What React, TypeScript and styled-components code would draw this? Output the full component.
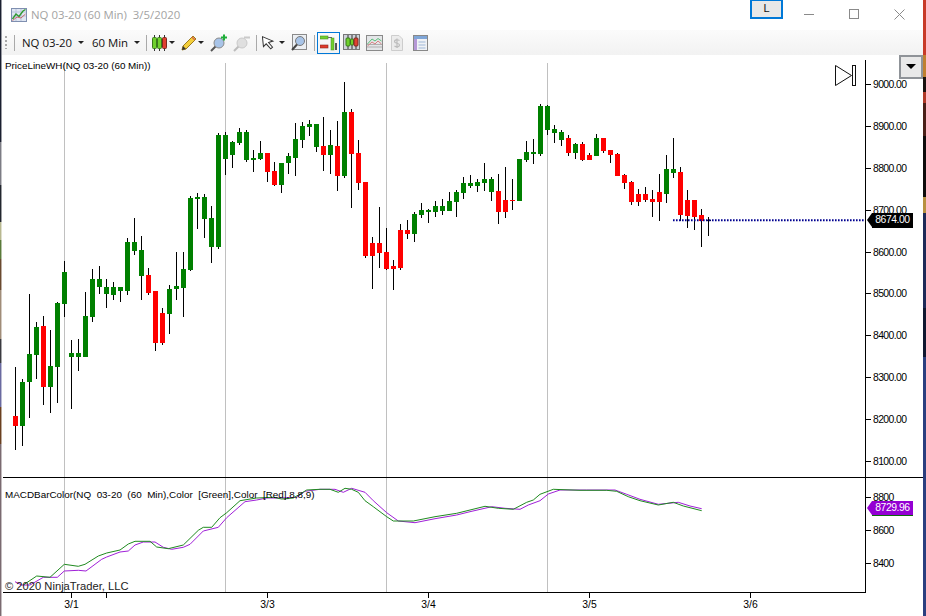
import React from 'react';
import styled, { createGlobalStyle } from 'styled-components';

const Global = createGlobalStyle`
  html, body { margin: 0; padding: 0; background: #fff; }
  #root { width: 926px; height: 616px; overflow: hidden; }
`;

const Desktop = styled.div`
  display: flex;
  width: 926px;
  height: 616px;
`;
const Strip = styled.div<{ $w: number; $bg: string }>`
  width: ${p => p.$w}px;
  flex: none;
  background: ${p => p.$bg};
`;
const Win = styled.div`
  flex: 1;
  display: flex;
  flex-direction: column;
  min-width: 0;
  background: #fff;
`;
const TitleBar = styled.div`
  height: 30px;
  flex: none;
  display: flex;
  align-items: flex-start;
  font-family: "Open Sans", "Liberation Sans", sans-serif;
`;
const TitleIcon = styled.svg`
  margin: 7px 0 0 9px;
  flex: none;
`;
const TitleText = styled.div`
  margin: 7px 0 0 4px;
  font-size: 11.4px;
  line-height: 16px;
  color: #a3a3a3;
  white-space: pre;
  flex: 1;
`;
const LockButton = styled.div`
  width: 33px;
  height: 19px;
  box-sizing: border-box;
  border: 2px solid #0078d7;
  border-top-width: 1px;
  background: #e8e8e8;
  font-family: "Liberation Sans", sans-serif;
  font-size: 11px;
  line-height: 15px;
  text-align: center;
  color: #111;
`;
const WinControls = styled.div`
  display: flex;
  margin: 9px 0 0 21px;
  gap: 35px;
  width: 119px;
`;
const Toolbar = styled.div`
  height: 25px;
  flex: none;
  display: flex;
  align-items: center;
  background: linear-gradient(#fbfbfb, #f2f2f2);
  font-family: "Open Sans", "Liberation Sans", sans-serif;
  font-size: 11.4px;
  color: #111;
`;
const Grip = styled.div`
  width: 2px;
  height: 13px;
  margin-left: 3px;
  background: repeating-linear-gradient(#a8a8a8 0 2px, transparent 2px 4px);
`;
const Sep = styled.div<{ $ml: number }>`
  width: 1px;
  height: 16px;
  margin-left: ${p => p.$ml}px;
  background: #a9a9a9;
  flex: none;
`;
const Combo = styled.span<{ $ml: number; $w: number }>`
  margin-left: ${p => p.$ml}px;
  width: ${p => p.$w}px;
  flex: none;
  white-space: nowrap;
`;
const Caret = styled.span<{ $ml: number }>`
  margin-left: ${p => p.$ml}px;
  width: 0;
  height: 0;
  flex: none;
  border-left: 3px solid transparent;
  border-right: 3px solid transparent;
  border-top: 3px solid #222;
`;
const Tool = styled.svg<{ $ml: number }>`
  margin-left: ${p => p.$ml}px;
  flex: none;
  display: block;
`;
const ActiveTool = styled.div<{ $ml: number }>`
  margin-left: ${p => p.$ml}px;
  width: 23px;
  height: 22px;
  box-sizing: border-box;
  border: 1px solid #0078d7;
  flex: none;
  display: flex;
  align-items: center;
  justify-content: center;
`;
const ChartArea = styled.div`
  position: relative;
  flex: 1;
  font-family: "Liberation Sans", sans-serif;
`;
const ChartSvg = styled.svg`
  display: block;
  font-family: "Liberation Sans", sans-serif;
`;
const Legend = styled.div<{ $top: number; $size: number }>`
  position: absolute;
  left: 3px;
  top: ${p => p.$top}px;
  font-size: ${p => p.$size}px;
  line-height: 12px;
  color: #000;
  white-space: pre;
`;
const Copyright = styled.div`
  position: absolute;
  left: 3px;
  top: 524px;
  font-size: 11.2px;
  line-height: 14px;
  color: #222;
  white-space: pre;
`;
const PanelMenu = styled.div`
  position: absolute;
  right: 0;
  top: 0;
  width: 24px;
  height: 24px;
  box-sizing: border-box;
  border: 2px solid #8f9398;
  background: #e9e9e9;
  display: flex;
  justify-content: center;
  padding-top: 7px;
  &::before {
    content: "";
    width: 0;
    height: 0;
    border-left: 5px solid transparent;
    border-right: 5px solid transparent;
    border-top: 5px solid #000;
  }
`;
const PriceTag = styled.div<{ $top: number; $bg: string; $shadow: string }>`
  position: absolute;
  left: 870px;
  top: ${p => p.$top}px;
  width: 41px;
  height: 14px;
  background: ${p => p.$bg};
  box-shadow: 0 1px 0 ${p => p.$shadow};
  color: #fff;
  font-size: 10.4px;
  letter-spacing: -0.45px;
  line-height: 14px;
  text-align: center;
  &::before {
    content: "";
    position: absolute;
    left: -5px;
    top: 0;
    width: 0;
    height: 0;
    border-top: 7px solid transparent;
    border-bottom: 7px solid transparent;
    border-right: 5px solid ${p => p.$bg};
  }
`;

type C = [number, number, number, number, 'g' | 'r'];
// body top, body bottom, wick top, wick bottom, colour; x = 15.5 + 7 * index
const candles: C[] = [
  [416,426,367,450,'r'],[382,426,379,446,'g'],[354,382,294,418,'g'],[327,355,322,379,'g'],[326,387,316,405,'r'],
  [366,387,330,413,'g'],[303,367,302,403,'g'],[272,304,261,317,'g'],[353,357,340,409,'g'],[353,357,339,371,'g'],
  [316,357,292,357,'g'],[279,317,269,322,'g'],[279,287,266,294,'g'],[287,294,279,308,'g'],[287,295,282,300,'g'],
  [287,291,287,302,'g'],[242,291,238,295,'g'],[242,251,218,255,'g'],[250,276,236,300,'g'],[275,293,268,295,'r'],
  [291,343,291,351,'r'],[313,343,308,345,'r'],[289,314,285,334,'g'],[286,289,252,300,'g'],[269,288,252,317,'g'],
  [198,270,196,271,'g'],[197,199,193,229,'g'],[197,219,194,238,'g'],[218,247,206,263,'g'],[135,247,133,249,'g'],
  [135,159,132,175,'g'],[142,155,141,168,'g'],[132,143,128,145,'g'],[132,160,130,162,'g'],[158,160,150,172,'g'],
  [153,159,141,160,'g'],[153,172,153,182,'r'],[171,185,162,186,'r'],[163,185,163,193,'g'],[156,163,153,174,'g'],
  [139,158,123,176,'g'],[126,140,122,148,'g'],[124,127,120,136,'g'],[124,147,124,152,'g'],[146,155,117,171,'r'],
  [145,155,130,174,'g'],[146,176,121,191,'r'],[112,176,82,178,'g'],[112,154,109,208,'r'],[153,183,140,190,'r'],
  [182,256,182,258,'r'],[243,256,237,289,'r'],[243,253,207,268,'r'],[252,269,228,270,'r'],[266,269,260,290,'r'],
  [230,268,224,270,'r'],[230,234,220,239,'r'],[214,234,212,242,'g'],[210,215,203,218,'g'],[210,212,209,223,'g'],
  [206,212,201,217,'g'],[206,211,199,215,'g'],[201,211,192,211,'g'],[192,202,190,217,'g'],[183,193,177,199,'g'],
  [183,186,175,188,'g'],[182,186,179,192,'g'],[179,183,163,191,'g'],[179,192,177,201,'g'],[191,212,174,224,'r'],
  [200,212,167,218,'r'],[200,201,179,210,'r'],[159,201,159,201,'g'],[152,160,141,162,'g'],[152,154,139,164,'g'],
  [106,154,104,156,'g'],[106,130,105,135,'g'],[129,133,125,143,'g'],[132,140,130,146,'g'],[138,153,135,156,'r'],
  [144,153,143,159,'g'],[144,160,142,161,'r'],[155,160,153,160,'r'],[138,156,134,156,'g'],[138,151,138,153,'r'],
  [150,155,150,163,'r'],[154,176,153,176,'r'],[175,183,174,189,'r'],[182,202,181,205,'r'],[194,202,189,206,'r'],
  [194,200,187,202,'r'],[199,202,190,217,'r'],[192,202,174,221,'r'],[169,194,155,203,'g'],[169,173,138,178,'g'],
  [172,215,167,221,'r'],[200,216,190,228,'r'],[200,217,200,230,'r'],[215,221,209,247,'r'],
];

const zoomLine = (pts: number[], ox: number) => {
  const out: string[] = [];
  for (let i = 0; i < pts.length; i += 2) out.push(`${(ox + pts[i] / 3).toFixed(1)},${(470 + pts[i + 1] / 3).toFixed(1)}`);
  return out.join(' ');
};
const green = [
  zoomLine([70,345,110,318,150,322,193,283,235,289,255,283,295,258,320,249,360,240,385,222,405,214,450,214,470,231,505,236,550,225,595,181,610,172,635,172,660,143,680,128,720,92,770,84,820,82,845,87,880,84,920,60,960,58], 0),
  zoomLine([30,58,55,67,75,55,95,58,115,67,135,92,160,110,200,140,220,153,280,153,345,140,410,130,450,120,495,109,535,115,580,118,620,97,640,90,660,73,700,58,780,61,860,61,890,64,925,80,960,92], 320),
  zoomLine([55,105,100,97,130,108,185,122], 640),
].join(' ');
const purple = [
  zoomLine([45,335,65,345,90,345,130,322,172,322,193,303,235,301,258,303,305,268,320,261,360,246,385,243,405,225,430,216,465,216,490,232,515,238,550,232,570,223,610,183,655,172,680,143,735,95,770,90,800,84,845,84,890,82,915,64,960,58], 0),
  zoomLine([45,58,70,67,95,55,135,67,160,92,200,128,235,153,285,158,345,146,410,135,450,125,515,110,555,115,600,118,625,105,660,92,685,72,720,60,800,60,885,60,920,73,960,88], 320),
  zoomLine([55,103,115,97,150,108,185,116], 640),
].join(' ');

const prices: [string, number][] = [
  ['9000.00',84],['8900.00',126],['8800.00',168],['8700.00',210],['8600.00',252],
  ['8500.00',293],['8400.00',335],['8300.00',377],['8200.00',419],['8100.00',461],
];
const subPrices: [string, number][] = [['8800',497],['8600',530],['8400',563]];
const dates: [string, number][] = [['3/1',71],['3/3',267],['3/4',428],['3/5',589],['3/6',750]];
const sessions = [64, 225, 386, 547];

const Chart = () => (
  <ChartSvg width={921} height={561} viewBox="2 55 921 561" shapeRendering="crispEdges">
    {sessions.map(x => <rect key={x} x={x} y={63} width={1} height={529} fill="#c0c0c0" />)}
    {candles.map((c, i) => {
      const x = 15 + 7 * i;
      return (
        <g key={i}>
          <rect x={x} y={c[2]} width={1} height={c[3] - c[2]} fill="#000" />
          <rect x={x - 2} y={c[0]} width={5} height={c[1] - c[0]} fill={c[4] === 'g' ? '#008000' : '#ff0000'} />
        </g>
      );
    })}
    <rect x={708} y={217} width={1} height={19} fill="#000" />
    <rect x={706} y={220} width={5} height={1} fill="#000" />
    <line x1={673} x2={865} y1={220.3} y2={220.3} stroke="#000090" strokeWidth={2} strokeDasharray="1.6 1.4" shapeRendering="auto" />
    <rect x={865} y={60} width={1} height={533} fill="#000" />
    <rect x={3} y={477} width={920} height={1} fill="#000" />
    <rect x={3} y={592} width={863} height={1} fill="#000" />
    <polyline points={purple} fill="none" stroke="#a020d8" strokeWidth={1} shapeRendering="auto" />
    <polyline points={green} fill="none" stroke="#1f8a1f" strokeWidth={1} shapeRendering="auto" />
    {[...prices, ...subPrices].map(([t, y]) => (
      <g key={t}>
        <rect x={866} y={y} width={5} height={1} fill="#000" />
        <text x={873} y={y + 3.5} fontSize={10.4} letterSpacing={-0.6} fill="#000" shapeRendering="auto">{t}</text>
      </g>
    ))}
    {dates.map(([t, x]) => (
      <g key={t}>
        <rect x={x} y={593} width={1} height={5} fill="#000" />
        <text x={x + 0.5} y={608} fontSize={10.4} textAnchor="middle" fill="#000" shapeRendering="auto">{t}</text>
      </g>
    ))}
    <rect x={106} y={593} width={1} height={5} fill="#000" />
    <g shapeRendering="auto" fill="none" stroke="#111" strokeWidth={1}>
      <path d="M835.5 65.5 L851.5 75.5 L835.5 85.5 Z" />
      <rect x={852.5} y={65.5} width={3} height={20} />
    </g>
  </ChartSvg>
);

const fade = 'linear-gradient(to right, transparent 50%, rgba(255,255,255,.55) 50%)';

const App = () => (
  <>
    <Global />
    <Desktop>
      <Strip $w={2} $bg={`${fade}, linear-gradient(#1a1f30 0 23%, #7c7c84 23% 30%, #22262e 30% 36%, #b8b890 36% 39%, #5a7a3a 39% 42%, #6a4a30 42% 47%, #a08c78 47% 55%, #3a3a40 55% 59%, #6a6aa0 59% 66%, #6a4020 66% 72%, #7a6a70 72% 100%)`} />
      <Win>
        <TitleBar>
          <TitleIcon width={16} height={15} viewBox="0 0 16 15">
            <rect x={0.5} y={1.5} width={15} height={13} fill="#dfe6f2" stroke="#7f8fb0" />
            <path d="M1 5h14M1 9h14M5 2v12M10 2v12" stroke="#b9c4da" />
            <path d="M1.5 12 L5 7 L8 9.5 L12 4 L14.5 2.5" fill="none" stroke="#2f9a2f" strokeWidth={1.4} />
            <path d="M1.5 13.5 L6 10 L10 11 L14.5 7" fill="none" stroke="#c04a4a" strokeWidth={0.8} />
          </TitleIcon>
          <TitleText>{'NQ 03-20 (60 Min)  3/5/2020'}</TitleText>
          <LockButton>L</LockButton>
          <WinControls>
            <svg width={10} height={10} viewBox="0 0 10 10"><rect x={0} y={5} width={10} height={1} fill="#8a8a8a" /></svg>
            <svg width={10} height={10} viewBox="0 0 10 10"><rect x={0.5} y={0.5} width={9} height={9} fill="none" stroke="#8a8a8a" /></svg>
            <svg width={11} height={11} viewBox="0 0 11 11"><path d="M0.5 0.5 L10.5 10.5 M10.5 0.5 L0.5 10.5" stroke="#8a8a8a" /></svg>
          </WinControls>
        </TitleBar>
        <Toolbar>
          <Grip />
          <Sep $ml={7} />
          <Combo $ml={7} $w={53}>NQ 03-20</Combo>
          <Caret $ml={3} />
          <Combo $ml={8} $w={39}>60 Min</Combo>
          <Caret $ml={3} />
          <Sep $ml={6} />
          <Tool $ml={5} width={16} height={16} viewBox="0 0 16 16">
            <path d="M2.5 0v16M7.5 0v16M12.5 0v16" stroke="#333" />
            <rect x={0.5} y={2.5} width={4} height={11} rx={1} fill="#6fd02c" stroke="#3a7a1a" />
            <rect x={5.5} y={2.5} width={4} height={11} rx={1} fill="#6fd02c" stroke="#3a7a1a" />
            <rect x={10.5} y={2.5} width={4} height={11} rx={1} fill="#e04030" stroke="#7a2a20" />
          </Tool>
          <Caret $ml={1} />
          <Tool $ml={6} width={16} height={16} viewBox="0 0 16 16">
            <path d="M1 15 L2 11 L12 1 L15 4 L5 14 Z" fill="#f4cf3a" stroke="#9a7a20" />
            <path d="M1 15 L2 11 L5 14 Z" fill="#333" />
            <path d="M11 2 L14 5" stroke="#d96a4a" strokeWidth={1.5} />
          </Tool>
          <Caret $ml={1} />
          <Tool $ml={6} width={18} height={18} viewBox="0 0 18 18">
            <path d="M1 17 L6 12" stroke="#555" strokeWidth={2} />
            <circle cx={9} cy={9} r={5} fill="#a8c4e8" stroke="#8a8a8a" />
            <path d="M14 0.5v6M11 3.5h6" stroke="#1fae3a" strokeWidth={2} />
          </Tool>
          <Tool $ml={5} width={18} height={18} viewBox="0 0 18 18" opacity={0.75}>
            <path d="M1 17 L6 12" stroke="#aaa" strokeWidth={2} />
            <circle cx={9} cy={9} r={5} fill="#d8d8d8" stroke="#bbb" />
            <path d="M11 3.5h6" stroke="#bbb" strokeWidth={2} />
          </Tool>
          <Sep $ml={5} />
          <Tool $ml={5} width={15} height={15} viewBox="0 0 15 15">
            <path d="M1 1 L1 11 L4 8.5 L8 14 L10 12.5 L6.5 7.5 L11 6.5 Z" transform="rotate(-6 7 7)" fill="#fff" stroke="#333" />
          </Tool>
          <Caret $ml={2} />
          <Tool $ml={6} width={16} height={17} viewBox="0 0 16 17">
            <rect x={1.5} y={0.5} width={14} height={15} fill="#eceff3" stroke="#8a8a8a" />
            <circle cx={9} cy={7} r={4.5} fill="#a8c4e8" stroke="#7a7a7a" />
            <path d="M1 16 L6 10.5" stroke="#444" strokeWidth={2} />
          </Tool>
          <Sep $ml={7} />
          <ActiveTool $ml={2}>
            <svg width={17} height={17} viewBox="0 0 17 17">
              <rect x={0} y={2} width={8} height={3} fill="#6fd02c" stroke="#4a8a2a" strokeWidth={0.6} />
              <rect x={0} y={11} width={8} height={3} fill="#e03a2a" stroke="#8a2a20" strokeWidth={0.6} />
              <path d="M8 3.5 L12 3.5" stroke="#666" />
              <rect x={11} y={4} width={3} height={12} fill="#6fd02c" stroke="#4a8a2a" strokeWidth={0.5} />
              <rect x={15} y={9} width={2} height={7} fill="#555" />
            </svg>
          </ActiveTool>
          <Tool $ml={3} width={17} height={17} viewBox="0 0 17 17">
            <rect x={0.5} y={0.5} width={16} height={15} fill="#cfd3da" stroke="#777" />
            <path d="M5 1v14M9 1v14M13 1v14" stroke="#333" />
            <rect x={3} y={4} width={4} height={8} rx={1} fill="#6fd02c" stroke="#3a7a1a" />
            <rect x={7.5} y={5} width={3} height={6} rx={1} fill="#6fd02c" stroke="#3a7a1a" />
            <rect x={11} y={4} width={4} height={8} rx={1} fill="#e04030" stroke="#7a2a20" />
          </Tool>
          <Tool $ml={6} width={17} height={16} viewBox="0 0 17 16">
            <rect x={0.5} y={0.5} width={16} height={15} fill="#e4e6e8" stroke="#8a8a8a" />
            <path d="M1 12h15M1 9.5h15" stroke="#b0b0b0" />
            <path d="M1.5 9 L6 4 L9 6 L12 3.5 L15.5 6" fill="none" stroke="#5abf7a" />
            <path d="M1.5 11 L6 7 L9 9 L12 6 L15.5 9" fill="none" stroke="#d88080" />
          </Tool>
          <Tool $ml={8} width={12} height={16} viewBox="0 0 12 16" opacity={0.75}>
            <path d="M0.5 0.5 H8 L11.5 4 V15.5 H0.5 Z" fill="#e8e8e8" stroke="#c0c0c0" />
            <path d="M8.5 5.5 C6 4 3.5 5 3.5 6.5 C3.5 9 8.5 7.5 8.5 10 C8.5 12 5.5 12.5 3.5 11 M6 3.5 V13" fill="none" stroke="#a8a8a8" strokeWidth={1.2} />
          </Tool>
          <Tool $ml={10} width={15} height={16} viewBox="0 0 15 16">
            <rect x={0.5} y={0.5} width={14} height={15} fill="#f0f2f6" stroke="#888" />
            <rect x={1} y={1} width={13} height={3} fill="#7fa6d8" />
            <rect x={1} y={4} width={3} height={11} fill="#b598d6" />
            <path d="M5.5 7h7M5.5 10h7M5.5 13h7" stroke="#9fb8d8" />
          </Tool>
        </Toolbar>
        <ChartArea>
          <Chart />
          <Legend $top={5} $size={9.85}>PriceLineWH(NQ 03-20 (60 Min))</Legend>
          <Legend $top={434} $size={9.9}>{'MACDBarColor(NQ  03-20  (60  Min),Color  [Green],Color  [Red],8,8,9)'}</Legend>
          <Copyright>© 2020 NinjaTrader, LLC</Copyright>
          <PanelMenu />
          <PriceTag $top={158} $bg="#000" $shadow="#000">8674.00</PriceTag>
          <PriceTag $top={446} $bg="#9400d3" $shadow="#0c6a0c">8729.96</PriceTag>
        </ChartArea>
      </Win>
      <Strip $w={3} $bg="linear-gradient(#c83a28 0 9%, #c08030 9% 12.5%, #1a1210 12.5% 15%, #b03a28 15% 16.7%, #4a2018 16.7% 22%, #0e0c0c 22% 32%, #b89040 32% 34.6%, #1e2a58 34.6% 50%, #101830 50% 58%, #2b3f7f 58% 100%)" />
    </Desktop>
  </>
);

export default App;
